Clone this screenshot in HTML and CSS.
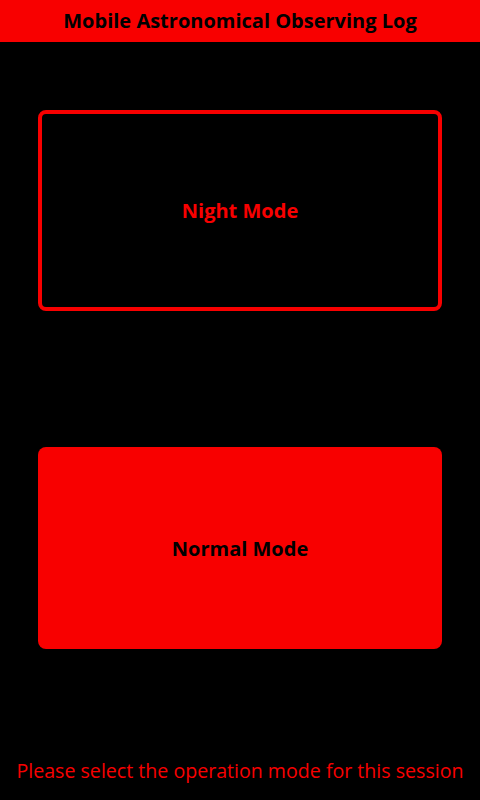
FILE: index.html
```html
<!DOCTYPE html>
<html lang="en">
<head>
    <meta charset="UTF-8">
    <meta name="viewport" content="width=device-width, initial-scale=1.0">
    <title>Mobile Astronomical Observing Log</title>
    <link rel="stylesheet" href="styles.css">
</head>
<body>
    <div class="header">Mobile Astronomical Observing Log</div>
    <div class="content">
        <button class="mode night">Night Mode</button>
        <button class="mode normal">Normal Mode</button>
    </div>
    <div class="hint">Please select the operation mode for this session</div>
</body>
</html>
```

FILE: styles.css
```css
body {
    font-family: "Open Sans", "Noto Sans", sans-serif;
    background-color: #000;
    color: #f80000;
    margin: 0;
    height: 800px;
    display: flex;
    flex-direction: column;
}
.header {
    height: 42px;
    line-height: 42px;
    background-color: #f80000;
    color: #000;
    font-size: 20px;
    font-weight: bold;
    text-align: center;
}
.content {
    flex: 1;
    display: flex;
    flex-direction: column;
    padding: 68px 38px 0;
    gap: 136px;
}
.mode {
    font-family: inherit;
    font-size: 20px;
    font-weight: bold;
    border-radius: 8px;
    cursor: pointer;
    box-sizing: border-box;
}
.night {
    height: 201px;
    background-color: #000;
    color: #f80000;
    border: 4px solid #f80000;
}
.normal {
    height: 202px;
    background-color: #f80000;
    color: #000;
    border: none;
}
.hint {
    font-size: 19.6px;
    text-align: center;
    padding-bottom: 16px;
}
```
